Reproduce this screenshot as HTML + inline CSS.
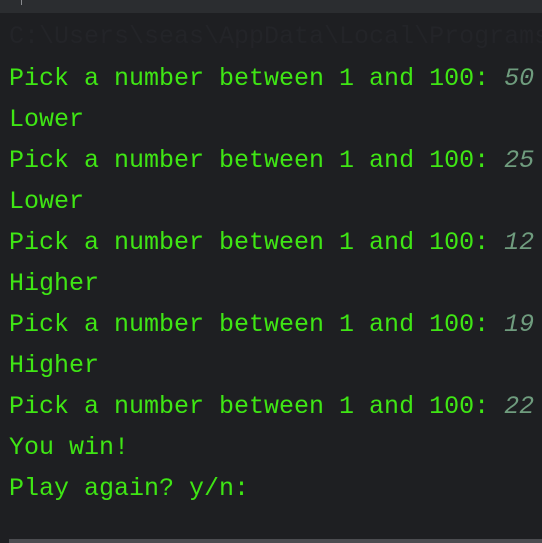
<!DOCTYPE html>
<html><head><style>
html,body{margin:0;padding:0;}
body{width:542px;height:543px;background:#1e1f22;position:relative;overflow:hidden;font-family:"Liberation Mono",monospace;font-size:25px;}
.top{position:absolute;left:0;top:0;width:542px;height:13px;background:#2b2d30;}
.tick{position:absolute;left:21px;top:0;width:1px;height:5px;background:#8a8c90;}
.l{position:absolute;left:9px;white-space:pre;color:#3fe614;line-height:41px;height:41px;}
.n{color:#6f9c7e;font-style:italic;}
.p{color:#232428;width:533px;overflow:hidden;}
.sb{position:absolute;left:9px;top:539px;width:533px;height:4px;background:#4b4c50;}
</style></head><body>
<div class="top"><div class="tick"></div></div>
<div class="l p" style="top:16px">C:\Users\seas\AppData\Local\Programs</div>
<div class="l" style="top:58px">Pick a number between 1 and 100: <span class="n">50</span></div>
<div class="l" style="top:99px">Lower</div>
<div class="l" style="top:140px">Pick a number between 1 and 100: <span class="n">25</span></div>
<div class="l" style="top:181px">Lower</div>
<div class="l" style="top:222px">Pick a number between 1 and 100: <span class="n">12</span></div>
<div class="l" style="top:263px">Higher</div>
<div class="l" style="top:304px">Pick a number between 1 and 100: <span class="n">19</span></div>
<div class="l" style="top:345px">Higher</div>
<div class="l" style="top:386px">Pick a number between 1 and 100: <span class="n">22</span></div>
<div class="l" style="top:427px">You win!</div>
<div class="l" style="top:468px">Play again? y/n:</div>
<div class="sb"></div>
</body></html>
